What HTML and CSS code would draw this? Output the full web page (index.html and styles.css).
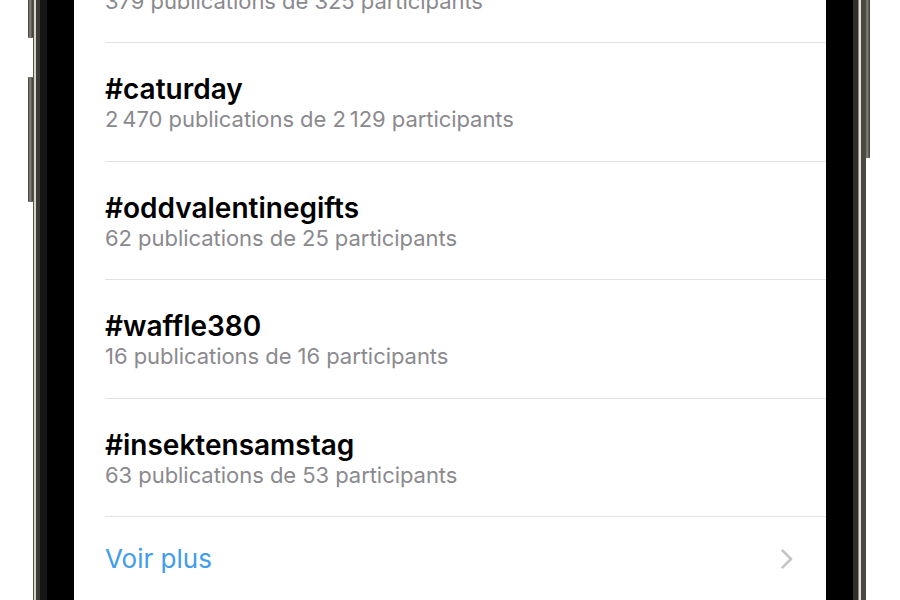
FILE: index.html
```html
<!DOCTYPE html>
<html lang="fr">
<head>
<meta charset="utf-8">
<title>Tendances</title>
<link rel="stylesheet" href="styles.css">
</head>
<body>
<div class="phone">
  <span class="btn btn-left btn-l1"></span>
  <span class="btn btn-left btn-l2"></span>
  <span class="btn btn-right btn-r1"></span>
  <div class="screen">
    <ul class="tags">
      <li class="tag">
        <div class="tag-name">#hashtag</div>
        <div class="tag-meta">379 publications de 325 participants</div>
      </li>
      <li class="tag">
        <div class="tag-name">#caturday</div>
        <div class="tag-meta">2&#8239;470 publications de 2&#8239;129 participants</div>
      </li>
      <li class="tag">
        <div class="tag-name">#oddvalentinegifts</div>
        <div class="tag-meta">62 publications de 25 participants</div>
      </li>
      <li class="tag">
        <div class="tag-name">#waffle380</div>
        <div class="tag-meta">16 publications de 16 participants</div>
      </li>
      <li class="tag">
        <div class="tag-name">#insektensamstag</div>
        <div class="tag-meta">63 publications de 53 participants</div>
      </li>
      <li class="more">
        <span class="more-label">Voir plus</span>
        <svg class="chevron" width="12" height="20" viewBox="0 0 12 20" aria-hidden="true">
          <path d="M1.6 1.6 L10 10 L1.6 18.4" fill="none" stroke="#c4c4c7" stroke-width="2.6" stroke-linecap="round" stroke-linejoin="round"/>
        </svg>
      </li>
    </ul>
  </div>
</div>
</body>
</html>
```

FILE: styles.css
```css
html, body {
  margin: 0;
  padding: 0;
  background: #ffffff;
}

body {
  width: 900px;
  height: 600px;
  overflow: hidden;
  font-family: Inter, "Noto Sans", "DejaVu Sans", sans-serif;
}

.phone {
  position: relative;
  margin-left: 33px;
  width: 833px;
  height: 600px;
  box-sizing: border-box;
  padding-left: 41px;
  padding-right: 40px;
  background: linear-gradient(to right,
    #55534e 0px, #55534e 1px,
    #d6d3cb 1px, #d6d3cb 3px,
    #3c3a35 3px, #3c3a35 7px,
    #161616 7px, #161616 14px,
    #000000 14px, #000000 calc(100% - 13px),
    #2f2d29 calc(100% - 13px), #2f2d29 calc(100% - 8px),
    #8c8980 calc(100% - 8px), #8c8980 calc(100% - 7px),
    #e2dfd7 calc(100% - 7px), #e2dfd7 calc(100% - 5px),
    #4a4843 calc(100% - 5px), #4a4843 100%);
}

.btn {
  position: absolute;
  width: 5px;
  background: linear-gradient(to right, #3a3833, #8b877f 40%, #3a3833);
  border-radius: 1px;
}

.btn-left { left: -5px; }
.btn-right { right: -4px; }

.btn-l1 { top: -4px; height: 42px; }
.btn-l2 { top: 77px; height: 125px; }
.btn-r1 { top: -4px; height: 162px; }

.screen {
  height: 600px;
  background: #ffffff;
  overflow: hidden;
}

.tags {
  list-style: none;
  margin: -75.5px 0 0 0;
  padding: 0 0 0 31px;
}

.tag {
  height: 118.5px;
  box-sizing: border-box;
  padding-top: 29px;
  border-bottom: 1px solid #e2e2e4;
}

.tag-name {
  font-size: 28px;
  line-height: 34px;
  font-weight: 600;
  color: #000000;
}

.tag-meta {
  font-size: 22px;
  line-height: 26px;
  letter-spacing: -0.05px;
  color: #8a8a8e;
}

.more {
  display: flex;
  align-items: center;
  justify-content: space-between;
  padding-top: 27px;
  padding-right: 33px;
}

.more-label {
  font-size: 26px;
  line-height: 30px;
  color: #409cec;
}

.chevron {
  display: block;
}
```
